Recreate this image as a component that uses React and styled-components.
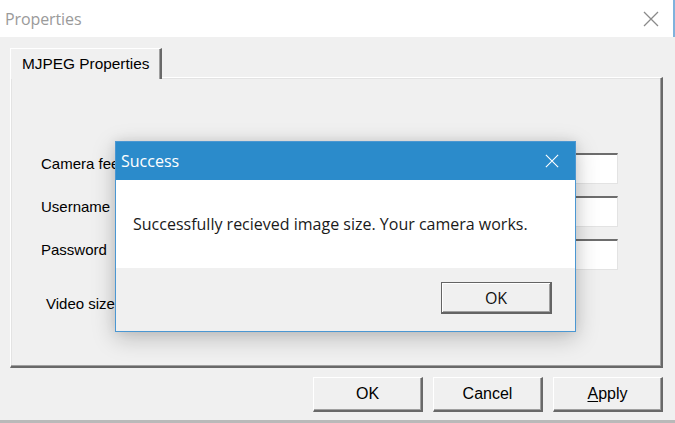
import styled, { createGlobalStyle } from 'styled-components';

const Global = createGlobalStyle`
  html, body {
    margin: 0;
    padding: 0;
    background: #f0f0f0;
  }
  * {
    box-sizing: border-box;
  }
`;

const Window = styled.div`
  position: relative;
  width: 675px;
  height: 423px;
  overflow: hidden;
  display: flex;
  flex-direction: column;
  background: #f0f0f0;
  font-family: "Liberation Sans", Arial, sans-serif;
  font-size: 15px;
  color: #000;
  border-bottom: 3px solid #b9b9b9;
`;

const TitleBar = styled.div`
  height: 37px;
  flex: none;
  display: flex;
  align-items: center;
  justify-content: space-between;
  padding: 0 14px 0 5px;
  background: #fff;
  border-right: 2px solid #7fb2dc;
`;

const TitleText = styled.span`
  font-family: "Open Sans", "Noto Sans", sans-serif;
  font-size: 16px;
  color: #9a9a9a;
  letter-spacing: -0.1px;
`;

const CloseGlyph = ({ color, size }) => (
  <svg width={size} height={size} viewBox="0 0 16 16">
    <path d="M1 1 L15 15 M15 1 L1 15" stroke={color} strokeWidth="1.3" fill="none" />
  </svg>
);

const Body = styled.div`
  flex: 1;
  display: flex;
  flex-direction: column;
  padding: 11px 12px 0 10px;
`;

const TabStrip = styled.div`
  display: flex;
  position: relative;
  z-index: 1;
  margin-bottom: -2px;
`;

const Tab = styled.div`
  height: 31px;
  width: 152px;
  display: flex;
  align-items: center;
  padding-left: 11px;
  background: #f0f0f0;
  border-top: 1px solid #fff;
  border-left: 1px solid #fff;
  border-right: 2px solid #696969;
  box-shadow: inset -1px 0 0 #a0a0a0;
  font-size: 15.4px;
`;

const Panel = styled.div`
  height: 291px;
  border-top: 1px solid #fff;
  border-left: 1px solid #fff;
  border-right: 2px solid #696969;
  border-bottom: 2px solid #696969;
  box-shadow: inset -1px -1px 0 #a0a0a0, inset 1px 1px 0 #e3e3e3;
  padding: 75px 43px 0 30px;
  display: flex;
  flex-direction: column;
  gap: 12px;
`;

const Row = styled.div`
  display: flex;
  align-items: flex-start;
  height: 31px;
  margin-top: ${p => p.$offset || 0}px;
`;

const Label = styled.span`
  width: 160px;
  line-height: 17px;
  padding-top: 2px;
  padding-left: ${p => p.$indent || 0}px;
`;

const Field = styled.div`
  flex: 1;
  height: 31px;
  background: #fff;
  border-top: 2px solid #6d6d6d;
  border-left: 2px solid #6d6d6d;
  border-right: 1px solid #e3e3e3;
  border-bottom: 1px solid #e3e3e3;
`;

const ButtonRow = styled.div`
  display: flex;
  justify-content: flex-end;
  gap: 10px;
  margin-top: 9px;
`;

const Button = styled.div`
  width: ${p => p.$w || 110}px;
  height: ${p => p.$h || 35}px;
  display: flex;
  align-items: center;
  justify-content: center;
  background: #f0f0f0;
  border-top: 1px solid #fff;
  border-left: 1px solid #fff;
  border-right: 2px solid #696969;
  border-bottom: 2px solid #696969;
  box-shadow: inset -1px -1px 0 #a0a0a0;
  font-size: 16px;
`;

const DefaultButton = styled(Button)`
  border: 1px solid #646464;
  border-right-width: 2px;
  border-bottom-width: 2px;
  box-shadow: inset 1px 1px 0 #fff, inset -1px -1px 0 #a0a0a0;
  font-family: "Open Sans", "Noto Sans", sans-serif;
  font-size: 16px;
  color: #111;
`;

const Underline = styled.span`
  text-decoration: underline;
  text-underline-offset: 2px;
`;

const Dialog = styled.div`
  position: absolute;
  left: 115px;
  top: 141px;
  width: 461px;
  height: 191px;
  display: flex;
  flex-direction: column;
  border: 1px solid #4b97d2;
  background: #f0f0f0;
  box-shadow: 0 6px 22px rgba(0, 0, 0, 0.22), 0 0 10px rgba(0, 0, 0, 0.08);
  font-family: "Open Sans", "Noto Sans", sans-serif;
`;

const DialogTitle = styled.div`
  height: 38px;
  flex: none;
  display: flex;
  align-items: center;
  justify-content: space-between;
  padding: 0 16px 0 5px;
  background: #2b8bcb;
  color: #fff;
  font-size: 16px;
`;

const DialogMessage = styled.div`
  height: 88px;
  flex: none;
  display: flex;
  align-items: center;
  padding: 0 0 0 17px;
  background: #fff;
  font-size: 16px;
  color: #1a1a1a;
`;

const DialogFooter = styled.div`
  flex: 1;
  display: flex;
  justify-content: flex-end;
  align-items: flex-start;
  padding: 14px 23px 0 0;
`;

export default function App() {
  return (
    <>
      <Global />
      <Window>
        <TitleBar>
          <TitleText>Properties</TitleText>
          <CloseGlyph color="#8a8a8a" size={16} />
        </TitleBar>
        <Body>
          <TabStrip>
            <Tab>MJPEG Properties</Tab>
          </TabStrip>
          <Panel>
            <Row>
              <Label>Camera feed URL</Label>
              <Field />
            </Row>
            <Row>
              <Label>Username</Label>
              <Field />
            </Row>
            <Row>
              <Label>Password</Label>
              <Field />
            </Row>
            <Row $offset={11}>
              <Label $indent={5}>Video size</Label>
            </Row>
          </Panel>
          <ButtonRow>
            <Button>OK</Button>
            <Button>Cancel</Button>
            <Button><Underline>A</Underline>pply</Button>
          </ButtonRow>
        </Body>

        <Dialog>
          <DialogTitle>
            <span>Success</span>
            <CloseGlyph color="#ffffff" size={14} />
          </DialogTitle>
          <DialogMessage>
            Successfully recieved image size. Your camera works.
          </DialogMessage>
          <DialogFooter>
            <DefaultButton $w={111} $h={32}>OK</DefaultButton>
          </DialogFooter>
        </Dialog>
      </Window>
    </>
  );
}
